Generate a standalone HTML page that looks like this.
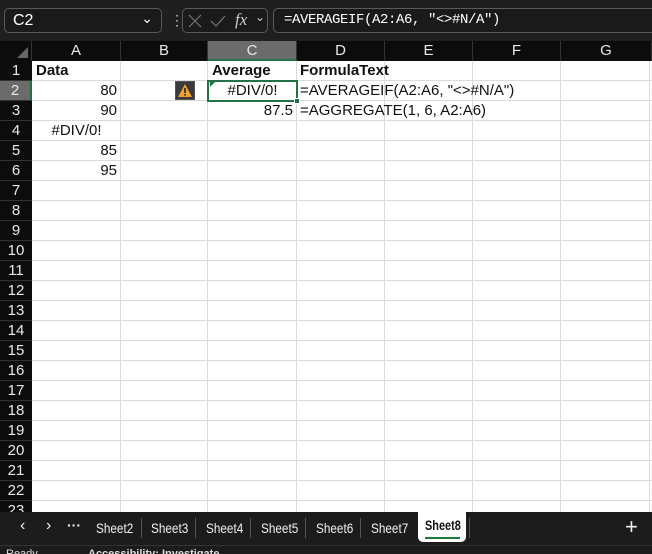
<!DOCTYPE html><html><head><style>
*{margin:0;padding:0;box-sizing:border-box}
body{width:652px;height:554px;overflow:hidden;background:#fff;font-family:"Liberation Sans",sans-serif;position:relative}
.abs{position:absolute}
.top{left:0;top:0;width:652px;height:41px;background:#1f1f1f}
.box{position:absolute;top:8px;height:25px;border:1px solid #5a5a5a;border-radius:5px;background:#1a1a1a;color:#fff}
.hdr{position:absolute;top:41px;height:20px;background:#0c0c0c;color:#e8e8e8;font-size:15px;text-align:center;line-height:20px;border-right:1px solid #333}
.rh{position:absolute;left:0;width:32px;height:20px;background:#0c0c0c;color:#e8e8e8;font-size:15px;text-align:center;line-height:20px;border-bottom:1px solid #333}
.vl{position:absolute;top:61px;width:1px;height:451px;background:#dadada}
.hl{position:absolute;left:32px;width:620px;height:1px;background:#dadada}
.c{position:absolute;font-size:15px;color:#111;height:20px;line-height:20px;white-space:nowrap}
.tabs{left:0;top:512px;width:652px;height:33px;background:#1c1c1c;color:#f0f0f0;font-size:14px}
.tabs span{position:absolute;top:8px}
.tabs span.s{transform:scaleX(0.84);transform-origin:left}
.sep{position:absolute;top:6px;width:1px;height:20px;background:#555}
</style></head><body>
<div class="abs top"></div>
<div class="box" style="left:4px;width:158px"><span style="position:absolute;left:8px;top:3px;font-size:16px">C2</span><span style="position:absolute;right:8px;top:1px;font-size:14px">&#8964;</span></div>
<div class="abs" style="left:170px;top:12px;color:#ccc;font-size:14px">&#8942;</div>
<div class="box" style="left:182px;width:86px;color:#777"><svg style="position:absolute;left:5px;top:5px" width="14" height="14"><path d="M1 1L13 13M13 1L1 13" stroke="#777" stroke-width="1.2"/></svg><svg style="position:absolute;left:27px;top:5px" width="16" height="14"><path d="M1 7L6 12L15 2" stroke="#777" stroke-width="1.2" fill="none"/></svg><span style="position:absolute;left:52px;top:1px;font-size:17px;font-style:italic;font-family:'Liberation Serif',serif;color:#ccc">fx</span><span style="position:absolute;left:72px;top:1px;font-size:12px;color:#ccc">&#8964;</span></div>
<div class="box" style="left:273px;width:390px"><span style="position:absolute;left:10px;top:3px;font-size:14px;font-family:'Liberation Mono',monospace;letter-spacing:-0.4px">=AVERAGEIF(A2:A6, "&lt;&gt;#N/A")</span></div>

<div class="hdr" style="left:0;width:32px"><div style="position:absolute;right:3px;bottom:3px;width:0;height:0;border-left:11px solid transparent;border-bottom:11px solid #666"></div></div>
<div class="hdr" style="left:32px;width:89px">A</div>
<div class="hdr" style="left:121px;width:87px">B</div>
<div class="hdr" style="left:208px;width:89px;background:#6b6b6b;border-bottom:2px solid #217346">C</div>
<div class="hdr" style="left:297px;width:88px">D</div>
<div class="hdr" style="left:385px;width:88px">E</div>
<div class="hdr" style="left:473px;width:88px">F</div>
<div class="hdr" style="left:561px;width:91px">G</div>

<div id="rows"></div>
<script>
let h='';
for(let i=1;i<=23;i++){let y=61+(i-1)*20;h+=`<div class="rh" style="top:${y}px;${i==2?'background:#6b6b6b;border-right:2px solid #217346':''}">${i}</div><div class="hl" style="top:${y+19}px"></div>`;}
[121,208,297,385,473,561,650].forEach(x=>h+=`<div class="vl" style="left:${x-1}px"></div>`);
document.getElementById('rows').outerHTML=h;
</script>
<div class="c" style="left:36px;top:61px;font-weight:bold">Data</div>
<div class="c" style="left:32px;width:85px;top:81px;text-align:right">80</div>
<div class="c" style="left:32px;width:85px;top:101px;text-align:right">90</div>
<div class="c" style="left:32px;width:89px;top:121px;text-align:center">#DIV/0!</div>
<div class="c" style="left:32px;width:85px;top:141px;text-align:right">85</div>
<div class="c" style="left:32px;width:85px;top:161px;text-align:right">95</div>
<div class="c" style="left:212px;top:61px;font-weight:bold">Average</div>
<div class="c" style="left:300px;top:61px;font-weight:bold">FormulaText</div>
<div class="abs" style="left:175px;top:81px;width:20px;height:19px;background:#3a3a3a;border:1px solid #555"><svg width="18" height="17" viewBox="0 0 18 17"><path d="M9 2 L16 15 L2 15 Z" fill="#f0a030"/><rect x="8.2" y="6" width="1.6" height="5" fill="#222"/><rect x="8.2" y="12" width="1.6" height="1.6" fill="#222"/></svg></div>
<div class="abs" style="left:207px;top:80px;width:91px;height:22px;border:2px solid #217346"></div>
<div class="abs" style="left:294px;top:98px;width:6px;height:6px;background:#217346;border:1px solid #fff"></div>
<div class="abs" style="left:210px;top:82px;width:0;height:0;border-top:5px solid #217346;border-right:5px solid transparent"></div>
<div class="c" style="left:208px;width:89px;top:81px;text-align:center">#DIV/0!</div>
<div class="c" style="left:208px;width:85px;top:101px;text-align:right">87.5</div>
<div class="c" style="left:300px;top:81px">=AVERAGEIF(A2:A6, "&lt;&gt;#N/A")</div>
<div class="c" style="left:300px;top:101px">=AGGREGATE(1, 6, A2:A6)</div>

<div class="abs tabs">
<span style="left:20px;font-size:16px;top:5px">&#8249;</span><span style="left:46px;font-size:16px;top:5px">&#8250;</span><span style="left:67px;top:5px;font-weight:bold">&middot;&middot;&middot;</span>
<span class="s" style="left:96px">Sheet2</span><div class="sep" style="left:141px"></div>
<span class="s" style="left:151px">Sheet3</span><div class="sep" style="left:195px"></div>
<span class="s" style="left:206px">Sheet4</span><div class="sep" style="left:250px"></div>
<span class="s" style="left:261px">Sheet5</span><div class="sep" style="left:305px"></div>
<span class="s" style="left:316px">Sheet6</span><div class="sep" style="left:360px"></div>
<span class="s" style="left:371px">Sheet7</span>
<div style="position:absolute;left:418px;top:0;width:48px;height:30px;background:#fff;border-radius:0 0 5px 5px"></div>
<span class="s" style="left:425px;top:5px;color:#111;font-weight:bold;transform:scaleX(0.78)">Sheet8</span>
<div style="position:absolute;left:425px;top:25px;width:35px;height:2px;background:#1e7a3c"></div>
<div class="sep" style="left:469px"></div>
<span style="left:625px;top:2px;font-size:22px;font-weight:300">+</span>
</div>
<div class="abs" style="left:0;top:545px;width:652px;height:9px;background:#1c1c1c;border-top:1px solid #333;overflow:hidden"><span style="position:absolute;left:6px;top:2px;font-size:11px;color:#ddd">Ready</span><span style="position:absolute;left:88px;top:2px;font-size:11px;color:#ddd;font-weight:bold">Accessibility: Investigate</span></div>
</body></html>
